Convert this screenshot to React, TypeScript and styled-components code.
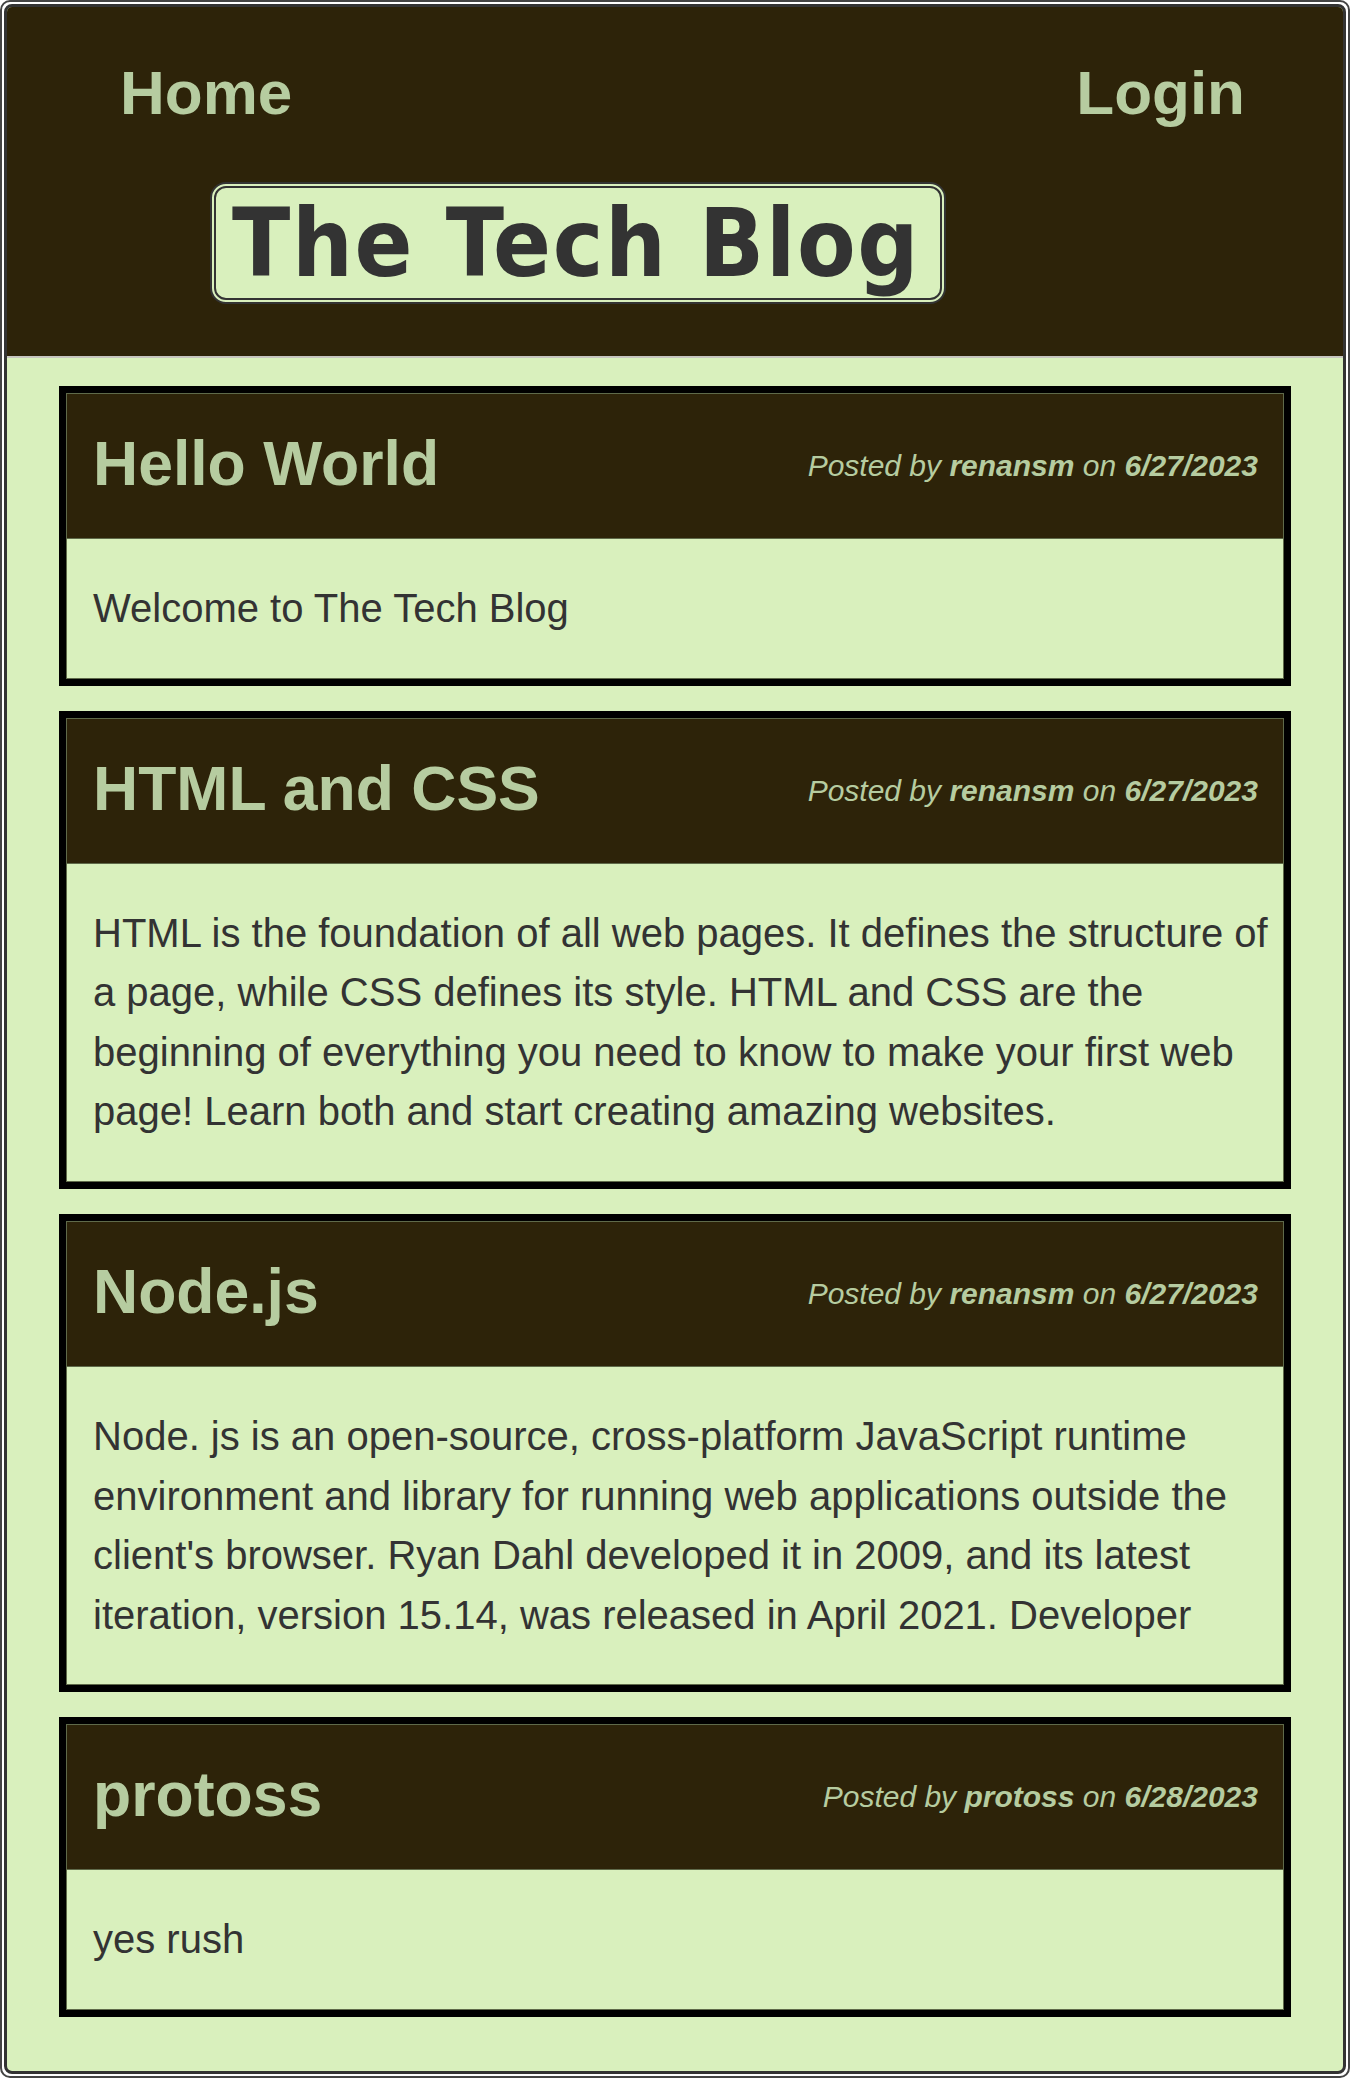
import React from "react";
import styled, { createGlobalStyle } from "styled-components";

const Global = createGlobalStyle`
  html, body {
    margin: 0;
    padding: 0;
    background: #ffffff;
  }
  body {
    font-family: "Liberation Sans", Arial, sans-serif;
  }
  * { box-sizing: border-box; }
`;

const DARK = "#2d2309";
const LIGHT = "#d9f0bd";
const SAGE = "#b6cca0";
const SEAM = "#5f6a4a";

const Frame = styled.div`
  min-height: 100vh;
  border: 2px solid #444;
  border-radius: 10px;
  padding: 2px;
  background: #fff;
`;

const Inner = styled.div`
  min-height: calc(100vh - 8px);
  border: 3px solid #333;
  border-radius: 8px;
  overflow: hidden;
  background: ${LIGHT};
  display: flex;
  flex-direction: column;
`;

const Header = styled.header`
  background: ${DARK};
  border-bottom: 2px solid #c6c6c0;
  padding: 50px 0 52px;
  display: flex;
  flex-direction: column;
  gap: 54px;
`;

const Nav = styled.nav`
  display: flex;
  justify-content: space-between;
  padding: 0 98px 0 113px;
`;

const NavLink = styled.a`
  font-size: 62px;
  font-weight: 700;
  color: ${SAGE};
  text-decoration: none;
`;

const TitleBox = styled.h1`
  margin: 0 0 0 203px;
  align-self: flex-start;
  border: 6px double #333;
  border-radius: 16px;
  background: ${LIGHT};
  color: #333;
  font-family: "DejaVu Sans Condensed", "DejaVu Sans", sans-serif;
  font-stretch: condensed;
  font-weight: 700;
  font-size: 95px;
  letter-spacing: 1.7px;
  line-height: 110px;
  padding: 0 20px 0 16px;
  white-space: nowrap;
`;

const Main = styled.main`
  padding: 28px 52px 53px;
  display: flex;
  flex-direction: column;
  gap: 25px;
`;

const Card = styled.article`
  border: 7px solid #000;
`;

const CardInner = styled.div`
  border: 1px solid ${SEAM};
`;

const CardHeader = styled.div`
  display: flex;
  justify-content: space-between;
  align-items: center;
  background: ${DARK};
  min-height: 145px;
  padding: 0 25px 0 26px;
  border-bottom: 1px solid ${SEAM};
`;

const PostTitle = styled.h2`
  margin: 0;
  padding-bottom: 6px;
  font-size: 62.5px;
  font-weight: 700;
  color: ${SAGE};
`;

const Meta = styled.p`
  margin: 0;
  font-size: 30px;
  font-style: italic;
  color: ${SAGE};

  strong {
    font-weight: 700;
  }
`;

const Body = styled.p`
  margin: 0;
  padding: 40px 4px 39px 26px;
  font-size: 40px;
  line-height: 59.6px;
  color: #333;
`;

type Post = { title: string; author: string; date: string; body: string };

const posts: Post[] = [
  {
    title: "Hello World",
    author: "renansm",
    date: "6/27/2023",
    body: "Welcome to The Tech Blog",
  },
  {
    title: "HTML and CSS",
    author: "renansm",
    date: "6/27/2023",
    body:
      "HTML is the foundation of all web pages. It defines the structure of a page, while CSS defines its style. HTML and CSS are the beginning of everything you need to know to make your first web page! Learn both and start creating amazing websites.",
  },
  {
    title: "Node.js",
    author: "renansm",
    date: "6/27/2023",
    body:
      "Node. js is an open-source, cross-platform JavaScript runtime environment and library for running web applications outside the client's browser. Ryan Dahl developed it in 2009, and its latest iteration, version 15.14, was released in April 2021. Developer",
  },
  {
    title: "protoss",
    author: "protoss",
    date: "6/28/2023",
    body: "yes rush",
  },
];

export default function App() {
  return (
    <>
      <Global />
      <Frame>
        <Inner>
          <Header>
            <Nav>
              <NavLink href="#">Home</NavLink>
              <NavLink href="#">Login</NavLink>
            </Nav>
            <TitleBox>The Tech Blog</TitleBox>
          </Header>
          <Main>
            {posts.map((p, i) => (
              <Card key={i}>
                <CardInner>
                  <CardHeader>
                    <PostTitle>{p.title}</PostTitle>
                    <Meta>
                      Posted by <strong>{p.author}</strong> on{" "}
                      <strong>{p.date}</strong>
                    </Meta>
                  </CardHeader>
                  <Body>{p.body}</Body>
                </CardInner>
              </Card>
            ))}
          </Main>
        </Inner>
      </Frame>
    </>
  );
}
